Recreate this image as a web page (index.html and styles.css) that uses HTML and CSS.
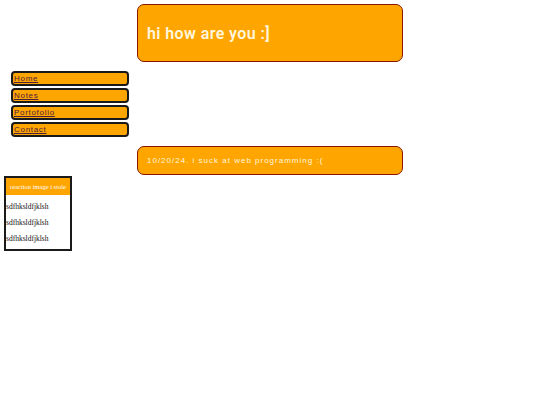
FILE: index.html
```html
<!DOCTYPE html>
<html lang="en">
<head>
    <meta charset="UTF-8">
    <title>hi how are you</title>
    <link rel="stylesheet" href="styles.css">
</head>
<body>

<div class="page">
    <div class="left">
        <ul class="nav">
            <li><a href="#">Home</a></li>
            <li><a href="#">Notes</a></li>
            <li><a href="#">Portofolio</a></li>
            <li><a href="#">Contact</a></li>
        </ul>

        <div class="side">
            <div class="side-head">reaction image i stole</div>
            <p>sdfhksldfjklsh</p>
            <p>sdfhksldfjklsh</p>
            <p>sdfhksldfjklsh</p>
        </div>
    </div>

    <div class="main">
        <div class="header">hi how are you :]</div>
        <div class="post">10/20/24. i suck at web programming :(</div>
    </div>
</div>

</body>
</html>
```

FILE: styles.css
```css
body {
    margin: 4px;
    background: #fff;
    font-family: "Liberation Sans", Arial, sans-serif;
}
.page {
    display: flex;
}
.left {
    width: 133px;
}
.nav {
    list-style: none;
    margin: 67px 0 0 7px;
    padding: 0;
    width: 118px;
}
.nav li {
    background: #ffa500;
    border: 2px solid #1a1a1a;
    border-radius: 4px;
    height: 11px;
    margin-bottom: 2px;
    padding-left: 1px;
    font-size: 8px;
    line-height: 11px;
}
.nav a {
    color: #4a2040;
    letter-spacing: 0.7px;
}
.side {
    margin-top: 39px;
    width: 64px;
    height: 71px;
    border: 2px solid #1a1a1a;
    font-family: "Liberation Serif", "Times New Roman", serif;
    color: #111;
}
.side-head {
    background: #ffa500;
    color: #fff;
    font-size: 6.5px;
    text-align: center;
    height: 17px;
    line-height: 17px;
    white-space: nowrap;
    overflow: hidden;
}
.side p {
    margin: 0;
    font-size: 7.5px;
    line-height: 16px;
}
.side p:first-of-type {
    margin-top: 4px;
}
.main {
    width: 266px;
}
.header {
    box-sizing: border-box;
    height: 58px;
    background: #ffa500;
    border: 1.5px solid #8b1500;
    border-radius: 7px;
    padding-left: 9px;
    display: flex;
    align-items: center;
    color: #fff6dc;
    font-family: Roboto, sans-serif;
    font-weight: 600;
    font-size: 16px;
    letter-spacing: 0.4px;
}
.post {
    box-sizing: border-box;
    margin-top: 84px;
    height: 29px;
    background: #ffa500;
    border: 1.5px solid #8b1500;
    border-radius: 7px;
    padding-left: 9px;
    display: flex;
    align-items: center;
    color: #fff6dc;
    font-size: 8px;
    letter-spacing: 1px;
}
```
